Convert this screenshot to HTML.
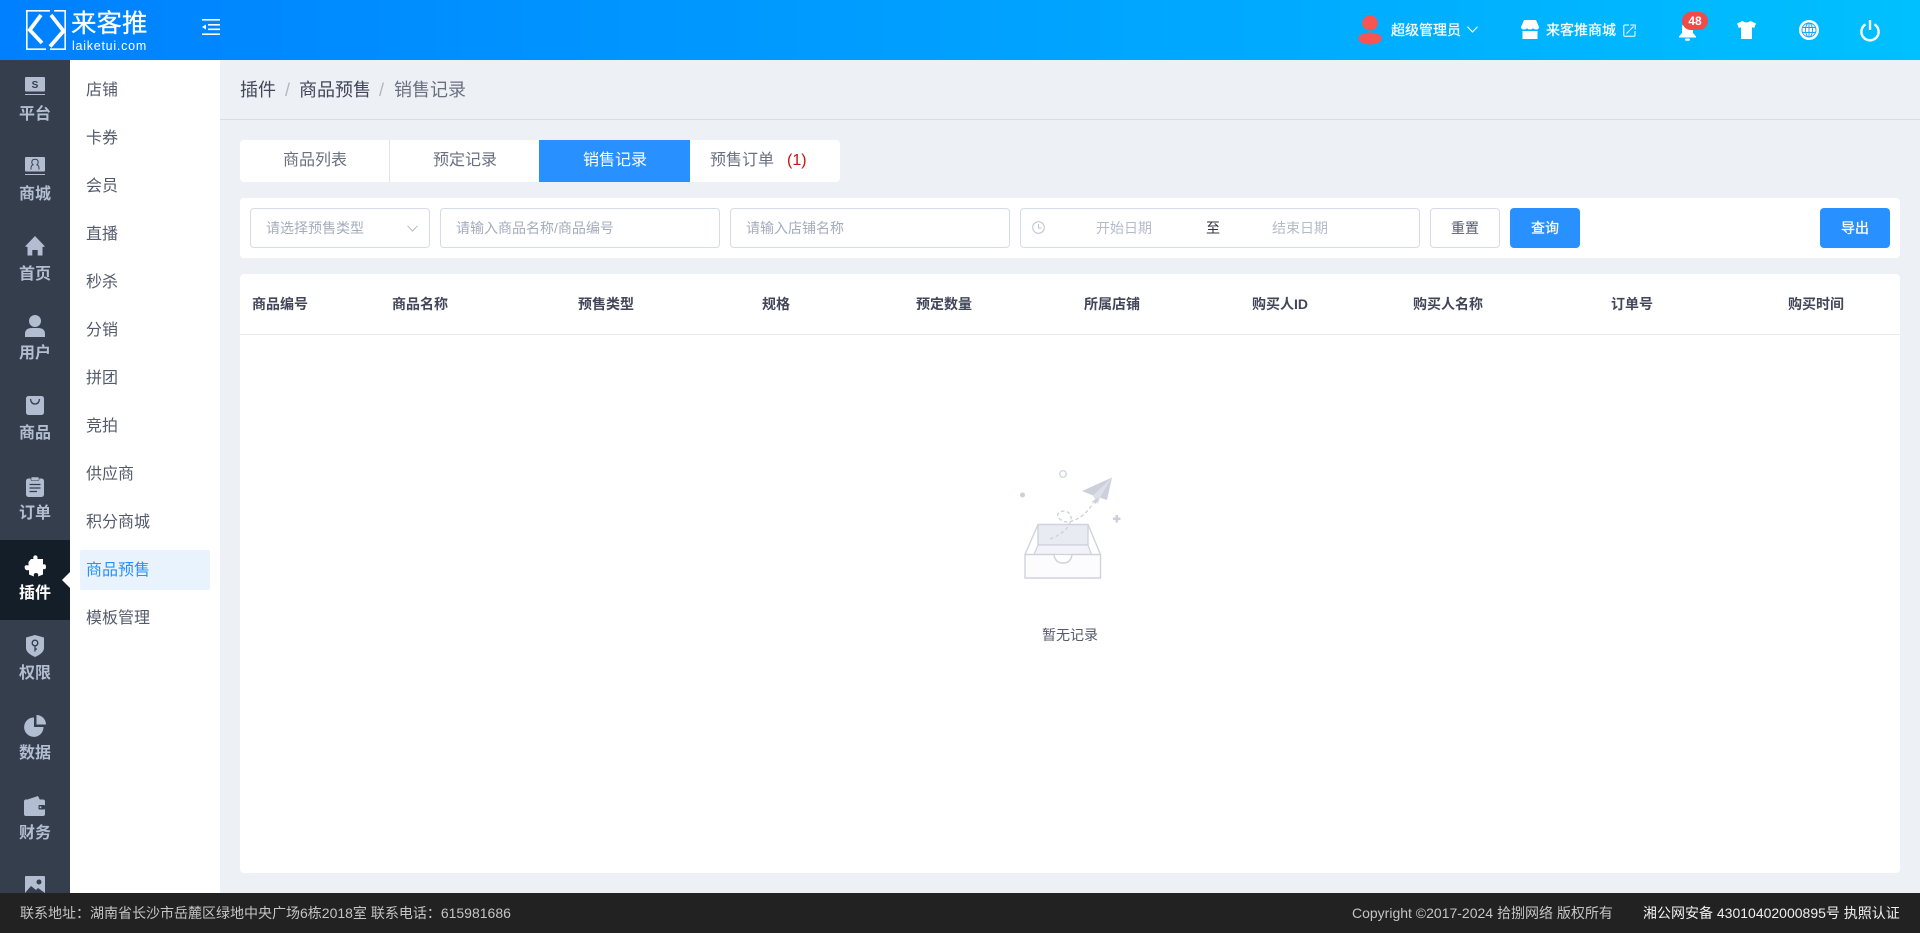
<!DOCTYPE html>
<html lang="zh"><head><meta charset="utf-8"><title>销售记录</title>
<style>
*{box-sizing:border-box}
html,body{margin:0;padding:0;width:1920px;height:933px;overflow:hidden;background:#edf1f5;font-family:"Liberation Sans","Noto Sans CJK SC",sans-serif;color:#414658}
.a{position:absolute}
.t{position:absolute;white-space:nowrap;line-height:20px;height:20px}
.c{transform:translateX(-50%)}
svg{position:absolute;display:block;overflow:visible}
.side{left:0;top:60px;width:70px;height:833px;background:#343e4d;overflow:hidden}
.nav{color:#b2bdd1;font-size:16px;font-weight:700;left:35px}
.sub{font-size:16px;color:#545b6b;left:86px}
.hd{font-size:14px;font-weight:700;color:#414658}
.box{position:absolute;background:#fff;border:1px solid #d5dbe8;border-radius:4px;height:40px;top:208px}
.ph{font-size:14px;color:#a4acbc}
.btn{position:absolute;top:208px;height:40px;width:70px;border-radius:4px;text-align:center;line-height:38px;font-size:14px}
.w{-webkit-text-stroke:.25px #fff}
</style></head><body>
<!-- header -->
<div class="a" style="left:0;top:0;width:1920px;height:60px;background:linear-gradient(90deg,#0080ff,#00c0ff)"></div>
<svg style="left:26px;top:10px" width="40" height="40" viewBox="0 0 40 40" fill="none" stroke="#fff">
<path d="M24 .8H.8V39.200H20M24 39.200H39.200V.8H28" stroke-width="1.600"/>
<path d="M15 5 3.800 20 16 33M25 5 37.500 21 24 36.500" stroke-width="3.800"/>
</svg>
<div class="t" style="left:71px;top:9px;height:30px;line-height:30px;font-size:25.500px;color:#fff;-webkit-text-stroke:.2px #fff">来客推</div>
<div class="t" style="left:72px;top:36px;font-size:12.500px;color:#fff;letter-spacing:.75px">laiketui.com</div>
<svg style="left:202px;top:19px" width="18" height="16" viewBox="0 0 18 16" fill="#fff"><rect x="0" y="0" width="18" height="1.600"/><rect x="6" y="5" width="12" height="1.600"/><rect x="6" y="9.500" width="12" height="1.600"/><rect x="0" y="14.400" width="18" height="1.600"/><path d="M0 8 4 5.500V10.500Z"/></svg>

<svg style="left:1357px;top:15px" width="26" height="30" viewBox="0 0 26 30" fill="#f85454"><ellipse cx="13" cy="8" rx="7.800" ry="7.500"/><ellipse cx="13" cy="23.500" rx="11.800" ry="6"/></svg>
<div class="t w" style="left:1391px;top:20px;font-size:14px;color:#fff">超级管理员</div>
<svg style="left:1467px;top:26px" width="11" height="7" viewBox="0 0 11 7" fill="none" stroke="#fff" stroke-width="1.100"><path d="M.5.8 5.500 6 10.500.8"/></svg>
<svg style="left:1521px;top:20px" width="18" height="19" viewBox="0 0 18 19" fill="#fff"><path d="M3 0H15L18 7Q18 9.500 15 9.500 12 9.500 12 7.500 12 9.500 9 9.500 6 9.500 6 7.500 6 9.500 3 9.500 0 9.500 0 7Z"/><path d="M1.500 11H16.500V19H1.500Z"/></svg>
<div class="t w" style="left:1546px;top:20px;font-size:14px;color:#fff">来客推商城</div>
<svg style="left:1623px;top:24px" width="13" height="13" viewBox="0 0 13 13" fill="none" stroke="#fff" stroke-width="1"><path d="M6 1H1.800Q.8 1 .8 2V11.200Q.8 12.200 1.800 12.200H11Q12 12.200 12 11.200V7M3.500 9.500 10.500 2.500M7.500 1H12.200V5.500"/></svg>
<svg style="left:1679px;top:22px" width="17" height="19" viewBox="0 0 17 19" fill="#fff"><path d="M8.500 0C4.500 0 3 3 3 6V11L0 14.500V15.500H17V14.500L14 11V6C14 3 12.500 0 8.500 0Z"/><rect x="6" y="16.500" width="5" height="2.200" rx="1"/></svg>
<div class="a" style="left:1682px;top:12px;width:26px;height:18px;border-radius:9px;background:#f04b4b;color:#fff;font-size:12px;font-weight:700;line-height:18px;text-align:center">48</div>
<svg style="left:1737px;top:21px" width="19" height="18" viewBox="0 0 19 18" fill="#fff"><path d="M5.500 0 0 2.500 1.800 7 4 6.300V18H15V6.300L17.200 7 19 2.500 13.500 0Q9.500 3 5.500 0Z"/></svg>
<svg style="left:1799px;top:20px" width="20" height="20" viewBox="0 0 20 20"><circle cx="10" cy="10" r="10" fill="#fff"/><g fill="none" stroke="#19a6ff" stroke-width="1"><ellipse cx="10" cy="10" rx="3.500" ry="7"/><path d="M10 3V17M3.500 7.500H16.500M3.500 12.500H16.500"/><circle cx="10" cy="10" r="7"/></g></svg>
<svg style="left:1860px;top:20px" width="20" height="20" viewBox="0 0 20 20" fill="none" stroke="#fff" stroke-width="2.400"><path d="M5.500 4.400A8.600 8.600 0 1 0 14.500 4.400" /><path d="M10 0V10" stroke-width="2.400"/></svg>

<!-- sidebar -->
<div class="a side"></div>
<div class="a" style="left:0;top:540px;width:70px;height:80px;background:#141e28"></div>
<div class="a" style="left:62px;top:572px;width:0;height:0;border-top:8px solid transparent;border-bottom:8px solid transparent;border-right:8px solid #fff"></div>
<svg style="left:25px;top:77px" width="20" height="20" viewBox="0 0 20 20"><rect y="0" width="20" height="14.500" rx="1" fill="#b2bdd1"/><rect y="17" width="20" height="1" fill="#b2bdd1"/><text x="10" y="11" font-size="10" font-weight="700" text-anchor="middle" fill="#343e4d" font-family="Liberation Sans">S</text></svg>
<svg style="left:25px;top:157px" width="20" height="20" viewBox="0 0 20 20"><rect y="0" width="20" height="14.500" rx="1" fill="#b2bdd1"/><rect y="17" width="20" height="1" fill="#b2bdd1"/><path d="M6 12.500V11Q6 8.500 8 7.800 6.800 6.800 6.800 5.200 6.800 2.200 10 2.200 13.200 2.200 13.200 5.200 13.200 6.800 12 7.800 14 8.500 14 11V12.500" fill="none" stroke="#343e4d" stroke-width="1"/></svg>
<svg style="left:25px;top:236px" width="20" height="20" viewBox="0 0 20 20" fill="#b2bdd1"><path d="M10 0 20 10.500 17.500 11V19.500H12.700V14H7.300V19.500H2.500V11L0 10.500Z"/></svg>
<svg style="left:25px;top:315px" width="20" height="22" viewBox="0 0 20 22" fill="#b2bdd1"><circle cx="10" cy="6" r="6"/><path d="M0 22V19Q0 13 7 13H13Q20 13 20 19V22Z"/></svg>
<svg style="left:26px;top:396px" width="18" height="19" viewBox="0 0 18 19"><rect width="18" height="19" rx="2.500" fill="#b2bdd1"/><path d="M4.500 3Q5 8 9 8 13 8 13.500 3" fill="none" stroke="#343e4d" stroke-width="1.300"/></svg>
<svg style="left:26px;top:477px" width="18" height="20" viewBox="0 0 18 20"><rect y="1.500" width="18" height="18.500" rx="2.500" fill="#b2bdd1"/><rect x="5" y="0" width="8" height="3.500" rx="1" fill="#b2bdd1" stroke="#343e4d" stroke-width=".6"/><path d="M3.500 7.500H14.500M3.500 11H14.500M3.500 14.500H11" stroke="#343e4d" stroke-width="1.200"/></svg>
<svg style="left:24px;top:555px" width="22" height="22" viewBox="0 0 22 22" fill="#fff"><path d="M7 4H9.500Q8.500 1 11 .4 14 0 13.500 4H19V9.500Q22 8.500 22 12 22 15 19 14V19.500L14 21.500Q15 18 12 18 9 18 10 21.500L5 19.500V15Q1.500 16 .7 13 0 9.500 4.500 10.500V7Z"/></svg>
<svg style="left:26px;top:635px" width="18" height="22" viewBox="0 0 18 22"><path d="M9 0 18 2.500V13Q18 18 9 22 0 18 0 13V2.500Z" fill="#b2bdd1"/><circle cx="9" cy="8" r="2.800" fill="none" stroke="#343e4d" stroke-width="1.400"/><path d="M9 10.500V16.500M9 14H11" stroke="#343e4d" stroke-width="1.300"/></svg>
<svg style="left:24px;top:715px" width="22" height="22" viewBox="0 0 22 22" fill="#b2bdd1"><path d="M10 2.500V12H19.500A9.700 9.700 0 1 1 10 2.500Z"/><path d="M12.500 0A9.500 9.500 0 0 1 22 9.500H12.500Z"/></svg>
<svg style="left:24px;top:796px" width="21" height="20" viewBox="0 0 21 20"><path d="M2 4 14 0 16 4Z" fill="#b2bdd1"/><rect y="3.500" width="21" height="16.500" rx="2" fill="#b2bdd1"/><rect x="14.500" y="9" width="6.500" height="4.500" rx="1" fill="#343e4d"/><circle cx="16.500" cy="11.200" r="1" fill="#b2bdd1"/></svg>
<svg style="left:25px;top:876px" width="20" height="17" viewBox="0 0 20 17"><rect width="20" height="20" rx="1" fill="#b2bdd1"/><circle cx="14" cy="6" r="2.500" fill="#343e4d"/><path d="M0 17 6 10 11 14 13 12 20 17Z" fill="#343e4d"/></svg>
<div class="t nav c" style="top:105px">平台</div>
<div class="t nav c" style="top:185px">商城</div>
<div class="t nav c" style="top:265px">首页</div>
<div class="t nav c" style="top:344px">用户</div>
<div class="t nav c" style="top:424px">商品</div>
<div class="t nav c" style="top:504px">订单</div>
<div class="t nav c" style="top:584px;color:#fff">插件</div>
<div class="t nav c" style="top:664px">权限</div>
<div class="t nav c" style="top:744px">数据</div>
<div class="t nav c" style="top:824px">财务</div>

<!-- submenu -->
<div class="a" style="left:70px;top:60px;width:150px;height:833px;background:#fff"></div>
<div class="a" style="left:80px;top:550px;width:130px;height:40px;background:#e8f3fe;border-radius:2px"></div>
<div class="t sub" style="top:81px">店铺</div>
<div class="t sub" style="top:129px">卡券</div>
<div class="t sub" style="top:177px">会员</div>
<div class="t sub" style="top:225px">直播</div>
<div class="t sub" style="top:273px">秒杀</div>
<div class="t sub" style="top:321px">分销</div>
<div class="t sub" style="top:369px">拼团</div>
<div class="t sub" style="top:417px">竞拍</div>
<div class="t sub" style="top:465px">供应商</div>
<div class="t sub" style="top:513px">积分商城</div>
<div class="t sub" style="top:561px;color:#2890ff">商品预售</div>
<div class="t sub" style="top:609px">模板管理</div>

<!-- breadcrumb -->
<div class="a" style="left:220px;top:119px;width:1700px;height:1px;background:#d5dbe8"></div>
<div class="t" style="left:240px;top:80px;font-size:18px;color:#414658">插件</div>
<div class="t" style="left:285px;top:80px;font-size:18px;color:#b2b6c0">/</div>
<div class="t" style="left:299px;top:80px;font-size:18px;color:#414658">商品预售</div>
<div class="t" style="left:379px;top:80px;font-size:18px;color:#b2b6c0">/</div>
<div class="t" style="left:394px;top:80px;font-size:18px;color:#6a7080">销售记录</div>

<!-- tabs -->
<div class="a" style="left:240px;top:140px;width:600px;height:42px;background:#fff;border-radius:4px;overflow:hidden">
  <div class="a" style="left:149px;top:0;width:1px;height:42px;background:#dfe3ec"></div>
  <div class="a" style="left:299px;top:0;width:151px;height:42px;background:#2890ff"></div>
</div>
<div class="t c" style="left:315px;top:151px;font-size:16px;color:#6a7080">商品列表</div>
<div class="t c" style="left:465px;top:151px;font-size:16px;color:#6a7080">预定记录</div>
<div class="t c" style="left:615px;top:151px;font-size:16px;color:#fff">销售记录</div>
<div class="t" style="left:710px;top:151px;font-size:16px;color:#6a7080">预售订单</div>
<div class="t" style="left:787px;top:151px;font-size:16px;color:#d01010">(1)</div>

<!-- filter -->
<div class="a" style="left:240px;top:198px;width:1660px;height:60px;background:#fff;border-radius:4px"></div>
<div class="box" style="left:250px;width:180px"></div>
<div class="t ph" style="left:266px;top:218px">请选择预售类型</div>
<svg style="left:407px;top:225px" width="11" height="7" viewBox="0 0 11 7" fill="none" stroke="#b4bbc9" stroke-width="1"><path d="M.5.8 5.500 6 10.500.8"/></svg>
<div class="box" style="left:440px;width:280px"></div>
<div class="t ph" style="left:456px;top:218px">请输入商品名称/商品编号</div>
<div class="box" style="left:730px;width:280px"></div>
<div class="t ph" style="left:746px;top:218px">请输入店铺名称</div>
<div class="box" style="left:1020px;width:400px"></div>
<svg style="left:1032px;top:221px" width="13" height="13" viewBox="0 0 13 13" fill="none" stroke="#bcc2ce" stroke-width="1"><circle cx="6.500" cy="6.500" r="5.800"/><path d="M6.500 3V7H9.500"/></svg>
<div class="t ph" style="left:1096px;top:218px;color:#b4bbc9">开始日期</div>
<div class="t" style="left:1206px;top:218px;font-size:14px;color:#303441">至</div>
<div class="t ph" style="left:1272px;top:218px;color:#b4bbc9">结束日期</div>
<div class="btn" style="left:1430px;background:#fff;border:1px solid #d5dbe8;color:#545b6b">重置</div>
<div class="btn w" style="left:1510px;background:#2890ff;color:#fff;line-height:40px">查询</div>
<div class="btn w" style="left:1820px;background:#2890ff;color:#fff;line-height:40px">导出</div>

<!-- table -->
<div class="a" style="left:240px;top:274px;width:1660px;height:599px;background:#fff;border-radius:4px"></div>
<div class="a" style="left:240px;top:334px;width:1660px;height:1px;background:#e9ecef"></div>
<div class="t hd c" style="left:280px;top:294px">商品编号</div>
<div class="t hd c" style="left:420px;top:294px">商品名称</div>
<div class="t hd c" style="left:606px;top:294px">预售类型</div>
<div class="t hd c" style="left:776px;top:294px">规格</div>
<div class="t hd c" style="left:944px;top:294px">预定数量</div>
<div class="t hd c" style="left:1112px;top:294px">所属店铺</div>
<div class="t hd c" style="left:1280px;top:294px">购买人ID</div>
<div class="t hd c" style="left:1448px;top:294px">购买人名称</div>
<div class="t hd c" style="left:1632px;top:294px">订单号</div>
<div class="t hd c" style="left:1816px;top:294px">购买时间</div>

<!-- empty -->
<svg style="left:980px;top:450px" width="180" height="200" viewBox="0 0 180 200">
<circle cx="83" cy="24" r="3.300" fill="none" stroke="#ccd0da" stroke-width="1.200"/>
<circle cx="42.500" cy="45" r="2.500" fill="#ccd0da"/>
<path d="M135.500 65H138V67.500H140.500V70H138V72.500H135.500V70H133V67.500H135.500Z" fill="#ccd0da"/>
<path d="M132 27.500 102 41 113 45.500 127 50Z" fill="#ccd0da"/>
<path d="M132 27.500 113 45.500 118 54 120 47.500Z" fill="#dcdfe7"/>
<path d="M119 47 116 54 112 51.500Z" fill="#ccd0da"/>
<path d="M58 74.500H108V95H58Z" fill="#e9ebf2" stroke="#cfd3de" stroke-width="1.400"/>
<path d="M58 95H108L111.500 104.500H54Z" fill="#f1f3f9" stroke="#cfd3de" stroke-width="1.200"/>
<path d="M70 89Q88 82 91 70 92 62 84 61 76 62 78 67 83 74 92 71 105 67 113 53" fill="none" stroke="#ccd0da" stroke-width="1.300" stroke-dasharray="3.500 2.500"/>
<path d="M58 74.500 45 104.500M108 74.500 120.500 104.500" fill="none" stroke="#cfd3de" stroke-width="1.400"/>
<path d="M45 104.500H74Q75 113 83 113 91 113 92 104.500H120.500V128H45Z" fill="#fcfcfe" stroke="#cfd3de" stroke-width="1.400"/>
</svg>
<div class="t c" style="left:1070px;top:625px;font-size:14px;color:#545b6b">暂无记录</div>

<!-- footer -->
<div class="a" style="left:0;top:893px;width:1920px;height:40px;background:#222"></div>
<div class="t" style="left:20px;top:903px;font-size:14px;color:#c4c4c4">联系地址：湖南省长沙市岳麓区绿地中央广场6栋2018室 联系电话：615981686</div>
<div class="t" style="left:1352px;top:903px;font-size:14px;color:#c4c4c4">Copyright ©2017-2024 拾捌网络 版权所有</div>
<div class="t" style="left:1643px;top:903px;font-size:14px;color:#eee">湘公网安备 43010402000895号 执照认证</div>
</body></html>
